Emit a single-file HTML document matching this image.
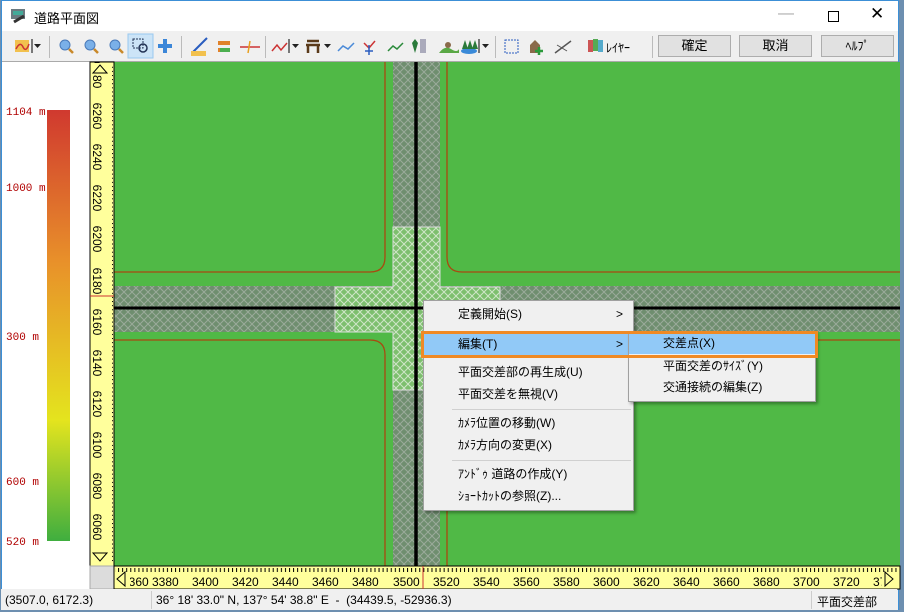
<!DOCTYPE html>
<html><head><meta charset="utf-8"><style>
*{margin:0;padding:0;box-sizing:border-box}
body{width:904px;height:612px;overflow:hidden;background:#6d8fb0;font-family:"Liberation Sans","Noto Sans CJK JP",sans-serif;font-size:12px;color:#000;position:relative}
#win{position:absolute;left:1px;top:0;width:898px;height:610px;background:#f0f0f0;border:1px solid #3c8fd6;border-bottom:none}
.title{position:absolute;left:0;top:0;width:896px;height:30px;background:#fff}
.title span{position:absolute;left:32px;top:7px;font-size:13px}
.tb{position:absolute;top:30px;left:0;width:896px;height:31px;background:#f0f0f0;border-bottom:1px solid #aaa}
.btn{position:absolute;top:4px;height:22px;background:#e1e1e1;border:1px solid #adadad;text-align:center;line-height:20px;font-size:13px}
.sep{position:absolute;top:5px;width:1px;height:22px;background:#bbb}
.menu{position:absolute;left:423px;top:300px;width:211px;height:211px;background:#f0f0f0;border:1px solid #a0a0a0;box-shadow:2px 2px 3px rgba(0,0,0,.35)}
.menu div,.sub div{position:absolute;left:0;width:100%;height:21px;line-height:21px;padding-left:34px;font-size:12px}
.menu hr{position:absolute;left:28px;right:2px;border:none;border-top:1px solid #d0d0d0}
.sub{position:absolute;left:628px;top:331px;width:188px;height:71px;background:#f0f0f0;border:1px solid #a0a0a0;box-shadow:2px 2px 3px rgba(0,0,0,.35)}
.status{position:absolute;left:0;top:589px;width:896px;height:21px;background:#f0f0f0;font-size:12px}
.status span{position:absolute;top:4px}
</style></head><body>
<div id="win">
<div class="title">
<svg style="position:absolute;left:8px;top:7px" width="18" height="16"><rect x="1" y="1" width="14" height="10" fill="#6b7a80"/><rect x="3" y="3" width="10" height="4" fill="#4a9"/><path d="M4 14 L14 8" stroke="#333" stroke-width="3"/></svg>
<span>道路平面図</span>
<span style="left:776px;top:4px;color:#aaa;font-size:16px">—</span>
<div style="position:absolute;left:826px;top:10px;width:11px;height:11px;border:1px solid #000"></div>
<span style="left:868px;top:3px;font-size:17px">✕</span>
</div>
<div class="tb">
<svg width="896" height="31" style="position:absolute;left:0;top:0">
<rect x="13" y="9" width="14" height="12" fill="#f2c14e"/><path d="M14 18 Q18 10 21 16 T27 13" stroke="#c33" fill="none" stroke-width="1.5"/><path d="M30 8v14" stroke="#000"/><path d="M32 13h7l-3.5 4z" fill="#222"/>
<g fill="#7ab0e8" stroke="#4a7ab8"><circle cx="63" cy="14" r="5"/><circle cx="88" cy="14" r="5"/><circle cx="113" cy="14" r="5"/></g>
<g stroke="#c9892a" stroke-width="2.5"><path d="M67 18l4 4M92 18l4 4M117 18l4 4"/></g>
<rect x="126" y="3" width="25" height="24" fill="#cce4f7" stroke="#99c9ef"/><rect x="131" y="8" width="10" height="9" fill="none" stroke="#235" stroke-dasharray="2 1"/><circle cx="141" cy="17" r="4" fill="none" stroke="#235" stroke-width="1.5"/>
<path d="M163 8v14M156 15h14" stroke="#3b86d8" stroke-width="4"/>
<path d="M191 21l14-14" stroke="#2a5dbf" stroke-width="2"/><rect x="189" y="20" width="15" height="5" fill="#f2c14e"/>
<path d="M216 12h12M216 19h12" stroke="#e0822a" stroke-width="4"/><path d="M218 19h10" stroke="#4caf50" stroke-width="4"/>
<path d="M238 16h20" stroke="#c33" stroke-width="1.5"/><path d="M248 10l-2 12" stroke="#e8a020" stroke-width="1.5"/>
<path d="M270 20l5-6 4 5 6-7" stroke="#c33" fill="none" stroke-width="1.5"/><path d="M287 8v14" stroke="#000"/><path d="M290 13h7l-3.5 4z" fill="#222"/>
<path d="M304 14h14M306 14v8M316 14v8M305 10h12" stroke="#5a3a1a" stroke-width="2.5"/><path d="M322 13h7l-3.5 4z" fill="#222"/>
<path d="M336 20l5-5 5 3 6-6" stroke="#4a8ad8" fill="none" stroke-width="1.5"/>
<path d="M362 12l5 5 6-7" stroke="#c33" fill="none" stroke-width="1.5"/><path d="M367 14v10M363 20h8" stroke="#2a5dbf" stroke-width="1.5"/>
<path d="M386 20l5-5 4 3 6-6" stroke="#2a8a3a" fill="none" stroke-width="1.5"/>
<path d="M413 22l-3-10 3-4 3 4-3 10z" fill="#2a7a3a"/><rect x="418" y="8" width="6" height="14" fill="#aab"/>
<path d="M437 22 q6-8 12-4 t8 0v4z" fill="#5aa845"/><circle cx="446" cy="14" r="3" fill="#8a6a4a"/>
<ellipse cx="467" cy="20" rx="8" ry="3" fill="#3a8ad8"/><path d="M460 18l3-9 3 9M465 18l3-9 3 9M470 18l3-9 3 9" fill="#2a7a3a"/><path d="M477 8v14" stroke="#000"/><path d="M480 13h7l-3.5 4z" fill="#222"/>
<rect x="503" y="9" width="13" height="13" fill="none" stroke="#2a5dbf" stroke-dasharray="2 1"/>
<path d="M528 22v-8l5-5 5 5v8z" fill="#8a6a4a"/><path d="M537 16v8M533 20h8" stroke="#2a9a3a" stroke-width="2.5"/>
<path d="M553 22l16-12" stroke="#555" stroke-width="1.5"/><path d="M555 14l10 6" stroke="#555"/>
<rect x="586" y="9" width="5" height="12" fill="#c55"/><rect x="591" y="8" width="5" height="12" fill="#5a5"/><rect x="596" y="9" width="5" height="12" fill="#5ac"/>
</svg>
<div class="sep" style="left:47px"></div><div class="sep" style="left:179px"></div><div class="sep" style="left:263px"></div><div class="sep" style="left:493px"></div><div class="sep" style="left:650px"></div>
<span style="position:absolute;left:604px;top:8px;font-size:12px">ﾚｲﾔｰ</span>
<div class="btn" style="left:656px;width:73px">確定</div>
<div class="btn" style="left:737px;width:73px">取消</div>
<div class="btn" style="left:819px;width:73px;font-size:12px">ﾍﾙﾌﾟ</div>
</div>
</div>
<svg width="904" height="612" style="position:absolute;left:0;top:0" font-family="Liberation Sans, sans-serif">
<defs>
<linearGradient id="lg" x1="0" y1="0" x2="0" y2="1"><stop offset="0" stop-color="#d0392f"/><stop offset="0.35" stop-color="#e8902a"/><stop offset="0.72" stop-color="#e4e41e"/><stop offset="1" stop-color="#3fae3f"/></linearGradient>
<pattern id="hx" width="8" height="8" patternUnits="userSpaceOnUse"><rect width="8" height="8" fill="#6f8e6f"/><path d="M0 0L8 8M8 0L0 8" stroke="#9aaa9a" stroke-width="1"/></pattern>
<pattern id="hl" width="8" height="8" patternUnits="userSpaceOnUse"><rect width="8" height="8" fill="#7dbf6e"/><path d="M0 0L8 8M8 0L0 8" stroke="#cfe6c8" stroke-width="1"/></pattern>
<pattern id="vt" width="8" height="4.11" patternUnits="userSpaceOnUse" y="75"><path d="M0 0.5h4" stroke="#000"/></pattern>
<pattern id="ht" width="4.07" height="8" patternUnits="userSpaceOnUse" x="114"><path d="M0.5 0v4" stroke="#000"/></pattern>
</defs>
<rect x="2" y="62" width="88" height="528" fill="#fff"/>
<rect x="47" y="110" width="23" height="431" fill="url(#lg)"/>
<g fill="#b00000" font-family="Liberation Mono, monospace" font-size="11"><text x="6" y="115">1104 m</text><text x="6" y="191">1000 m</text><text x="6" y="340">300 m</text><text x="6" y="485">600 m</text><text x="6" y="545">520 m</text></g>
<rect x="114" y="62" width="786" height="504" fill="#50b946"/>
<rect x="393" y="62" width="47" height="504" fill="url(#hx)"/>
<rect x="114" y="286" width="786" height="46" fill="url(#hx)"/>
<path d="M393 227h47v60h60v45h-60v58h-47v-58h-58v-45h58z" fill="url(#hl)" stroke="#ddd"/>
<g stroke="#a84a10" stroke-width="1.3" fill="none"><path d="M385 62v195q0 15-15 15H114"/><path d="M447 62v195q0 15 15 15h438"/><path d="M385 566V355q0-15-15-15H114"/><path d="M447 566V355q0-15 15-15h438"/></g>
<path d="M416 62v504" stroke="#000" stroke-width="3.5"/><path d="M114 308h786" stroke="#000" stroke-width="3"/>
<rect x="90" y="62" width="24" height="504" fill="#ffff9c" stroke="#000"/>
<rect x="109" y="64" width="4" height="500" fill="url(#vt)"/>
<path d="M90 296h24" stroke="#c33"/>
<g font-size="12" text-anchor="middle">
<g transform="translate(93,75) rotate(90)"><text>6280</text></g><g transform="translate(93,116) rotate(90)"><text>6260</text></g><g transform="translate(93,157) rotate(90)"><text>6240</text></g><g transform="translate(93,198) rotate(90)"><text>6220</text></g><g transform="translate(93,239) rotate(90)"><text>6200</text></g><g transform="translate(93,281) rotate(90)"><text>6180</text></g><g transform="translate(93,322) rotate(90)"><text>6160</text></g><g transform="translate(93,363) rotate(90)"><text>6140</text></g><g transform="translate(93,404) rotate(90)"><text>6120</text></g><g transform="translate(93,445) rotate(90)"><text>6100</text></g><g transform="translate(93,486) rotate(90)"><text>6080</text></g><g transform="translate(93,527) rotate(90)"><text>6060</text></g>
</g>
<rect x="91" y="63" width="18" height="12" fill="#ffff9c"/>
<path d="M93 73h14l-7-8z M93 553h14l-7 8z" fill="#ffff9c" stroke="#000"/>
<rect x="90" y="566" width="24" height="23" fill="#dcdcdc" stroke="#aaa"/>
<rect x="114" y="566" width="786" height="23" fill="#ffff9c" stroke="#000"/>
<rect x="115" y="567" width="784" height="5" fill="url(#ht)"/>
<path d="M423 566v23" stroke="#c33"/>
<g font-size="12"><text x="122" y="586">3360</text><text x="152" y="586">3380</text><text x="192" y="586">3400</text><text x="232" y="586">3420</text><text x="272" y="586">3440</text><text x="312" y="586">3460</text><text x="352" y="586">3480</text><text x="393" y="586">3500</text><text x="433" y="586">3520</text><text x="473" y="586">3540</text><text x="513" y="586">3560</text><text x="553" y="586">3580</text><text x="593" y="586">3600</text><text x="633" y="586">3620</text><text x="673" y="586">3640</text><text x="713" y="586">3660</text><text x="753" y="586">3680</text><text x="793" y="586">3700</text><text x="833" y="586">3720</text><text x="873" y="586">37</text></g>
<rect x="115" y="573" width="15" height="15" fill="#ffff9c"/><path d="M125 572l-8 7 8 7z" fill="none" stroke="#000"/>
<rect x="882" y="573" width="17" height="15" fill="#ffff9c"/><path d="M885 572l8 7-8 7z" fill="none" stroke="#000"/>
</svg>
<div class="status" style="left:1px"><span style="left:4px">(3507.0, 6172.3)</span><div style="position:absolute;left:150px;top:2px;height:18px;border-left:1px solid #ccc"></div><span style="left:155px">36° 18' 33.0" N, 137° 54' 38.8" E &nbsp;- &nbsp;(34439.5, -52936.3)</span><div style="position:absolute;left:810px;top:2px;height:18px;border-left:1px solid #ccc"></div><span style="left:816px">平面交差部</span></div>
<div class="menu">
<div style="top:3px">定義開始(S)<span style="position:absolute;right:10px">&gt;</span></div>
<div style="top:33px;background:#91c9f7">編集(T)<span style="position:absolute;right:10px">&gt;</span></div>
<div style="top:61px">平面交差部の再生成(U)</div>
<div style="top:83px">平面交差を無視(V)</div>
<hr style="top:108px">
<div style="top:112px">ｶﾒﾗ位置の移動(W)</div>
<div style="top:134px">ｶﾒﾗ方向の変更(X)</div>
<hr style="top:159px">
<div style="top:163px">ｱﾝﾄﾞｩ 道路の作成(Y)</div>
<div style="top:185px">ｼｮｰﾄｶｯﾄの参照(Z)...</div>
</div>
<div class="sub">
<div style="top:1px;background:#91c9f7">交差点(X)</div>
<div style="top:24px">平面交差のｻｲｽﾞ(Y)</div>
<div style="top:45px">交通接続の編集(Z)</div>
</div>
<div style="position:absolute;left:421px;top:331px;width:397px;height:27px;border:3px solid #f08a24"></div>
</body></html>
